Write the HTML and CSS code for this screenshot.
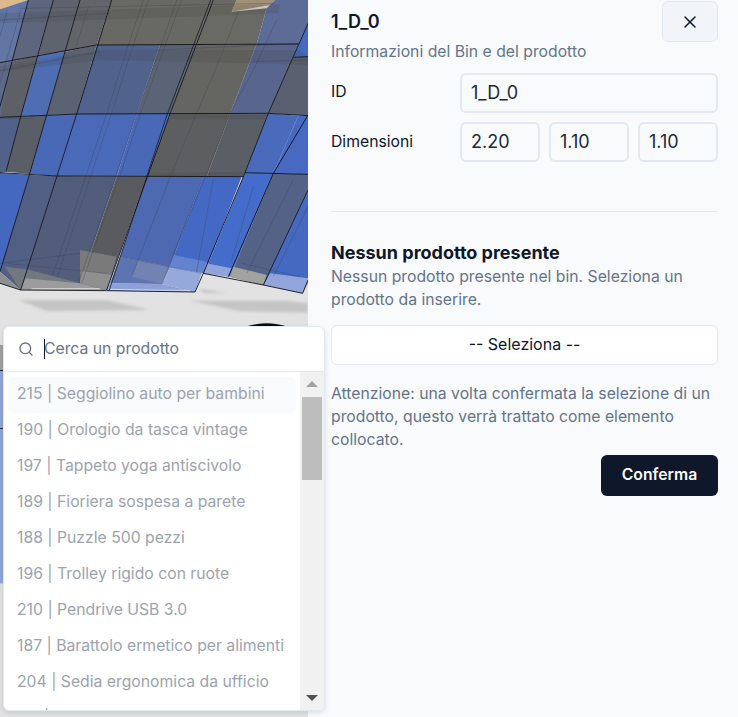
FILE: index.html
```html
<!DOCTYPE html>
<html lang="it">
<head>
<meta charset="utf-8">
<title>Bin</title>
<link rel="stylesheet" href="styles.css">
</head>
<body>
<div class="app">
  <div class="viewport">
    <svg class="scene" viewBox="0 0 924 2151" preserveAspectRatio="none" xmlns="http://www.w3.org/2000/svg">
      <defs>
        <filter id="soft"><feGaussianBlur stdDeviation="5"/></filter>
        <filter id="tiny"><feGaussianBlur stdDeviation="1.2"/></filter>
      </defs>
      <rect width="924" height="2151" fill="#e2e2e2"/>
      <!-- top row -->
      <polygon points="0,0 85,0 0,28" fill="#e2b884"/>
      <polygon points="0,28 85,0 35,185 0,190" fill="#5f76ab"/>
      <polygon points="85,0 160,0 115,165 35,185" fill="#5d6680"/>
      <polygon points="160,0 240,0 195,155 115,165" fill="#5f636f"/>
      <polygon points="240,0 335,0 290,135 195,155" fill="#62646a"/>
      <polygon points="335,0 640,0 590,135 290,135" fill="#696962"/>
      <polygon points="640,0 710,0 695,35 800,25 770,132 590,135" fill="#6a6a63"/>
      <polygon points="710,0 825,0 810,15 695,35" fill="#a48f73"/>
      <polygon points="825,0 924,0 924,70 895,132 770,132 800,25" fill="#5a6c9c"/>
      <polygon points="924,70 924,170 880,172 895,132" fill="#4169cc"/>
      <!-- second row -->
      <polygon points="0,188 35,185 10,352 0,352" fill="#5d6a8c"/>
      <polygon points="35,185 115,165 62,350 0,352" fill="#5e6068"/>
      <polygon points="115,165 195,155 140,345 62,350" fill="#4b6dbc"/>
      <polygon points="195,155 290,135 230,342 140,345" fill="#5a6274"/>
      <polygon points="290,135 480,135 410,342 230,342" fill="#4f6292"/>
      <polygon points="480,135 590,135 510,342 410,342" fill="#5a6379"/>
      <polygon points="590,135 770,132 690,342 510,342" fill="#656560"/>
      <polygon points="770,132 895,132 880,172 805,340 690,342" fill="#566692"/>
      <polygon points="880,172 924,170 924,347 805,340" fill="#5a6072"/>
      <!-- third row -->
      <polygon points="0,352 62,350 18,515 0,518" fill="#4e6290"/>
      <polygon points="62,350 140,345 90,522 18,515" fill="#5a5e68"/>
      <polygon points="140,345 230,342 170,528 90,522" fill="#4568c0"/>
      <polygon points="230,342 410,342 350,530 170,528" fill="#466ac4"/>
      <polygon points="410,342 510,342 440,530 350,530" fill="#4569c2"/>
      <polygon points="510,342 690,342 620,530 440,530" fill="#5d5e60"/>
      <polygon points="690,342 805,340 735,518 730,530 620,530" fill="#5a5e66"/>
      <polygon points="805,340 895,347 820,520 735,518" fill="#466bc6"/>
      <polygon points="895,347 924,347 924,523 820,520" fill="#4469ce"/>
      <!-- bottom row -->
      <polygon points="0,518 88,525 0,815" fill="#3f68cc"/>
      <polygon points="88,525 170,528 62,870 0,815" fill="#505f8a"/>
      <polygon points="170,528 350,530 240,850 62,870" fill="#515d80"/>
      <polygon points="350,530 440,530 320,870 240,850" fill="#5a5b60"/>
      <polygon points="440,530 610,530 510,800 360,770" fill="#4869bc"/>
      <polygon points="610,530 725,530 615,815 510,800" fill="#3f69d2"/>
      <polygon points="735,518 820,520 690,830 615,815" fill="#3e6cd8"/>
      <polygon points="820,520 924,523 924,570 790,855 690,830" fill="#52628c"/>
      <polygon points="924,570 924,835 790,855" fill="#4068cc"/>
      <!-- lower translucent band -->
      <polygon points="0,815 62,870 0,850" fill="#8d8e90"/>
      <polygon points="15,800 80,808 240,850 320,870 62,870" fill="#73777f"/>
      <polygon points="62,870 320,872 240,850 75,835" fill="#9c9c9d"/>
      <polygon points="240,750 350,770 320,870 240,850" fill="#7a7a7a"/>
      <polygon points="245,810 335,825 320,870 240,850" fill="#8f8f8f"/>
      <polygon points="360,770 510,800 485,852 330,850" fill="#5a74b8"/>
      <polygon points="415,780 510,800 485,852 395,830" fill="#6f83b8"/>
      <polygon points="330,850 485,852 585,876 320,872" fill="#8aa0de"/>
      <polygon points="510,800 605,820 585,876 485,852" fill="#94a9e2"/>
      <polygon points="520,765 620,785 610,820 505,800" fill="#5f82da"/>
      <polygon points="618,790 695,805 685,830 610,820" fill="#8ea4e0"/>
      <polygon points="700,800 800,825 790,855 690,830" fill="#a2a29f"/>
      <polygon points="810,820 924,835 924,850 908,880 790,855" fill="#8fa5e2"/>
      <!-- horizontal ghost bands -->
      <g fill="#3c3c3c" fill-opacity=".16">
        <polygon points="0,40 840,12 835,40 0,70"/>
        <polygon points="0,200 300,150 900,150 924,175 924,195 760,190 300,180 0,215"/>
        <polygon points="510,345 800,345 790,358 510,358"/>
        <polygon points="440,520 730,515 725,530 440,532"/>
      </g>
      <!-- inner ghost edges -->
      <g fill="none" stroke="#3a4050" stroke-opacity=".45" stroke-width="2.2">
        <path d="M22 30 0 110M62 30 0 250M265 20 225 150M430 0 380 150 320 340 260 520 158 825M445 0 395 150 335 340 275 520 172 830M530 0 480 145 410 340 350 520 235 850M545 0 492 145 422 340 362 520 245 850M715 35 650 200 590 340 515 520 395 830M830 60 770 190 690 340 620 520 485 852M608 535 510 790M640 535 590 815M760 560 695 780M880 540 740 820M924 620 820 830M60 25 820 10M0 60 330 40M0 212 300 155M470 150 900 130M760 185 924 180M0 790 240 760M20 790 320 820M360 770 605 820M725 790 900 830M0 355 100 355"/>
      </g>
      <!-- bold edges -->
      <g fill="none" stroke="#101218" stroke-width="2.7" stroke-linejoin="round">
        <path d="M85 0 0 320M160 0 62 350 18 515M240 0 140 345 88 525 0 815M335 0 230 342 62 870M640 0 510 342 320 870M924 70 805 340 735 518 610 820 585 876M924 345 820 520 685 830M924 570 790 855M0 188 290 135 895 132M880 172 924 170M0 352 230 342 805 340 924 347M0 518 170 528 730 530M735 518 924 523M0 850 62 870 320 872 585 876M610 820 790 855 908 880 924 840"/>
        <path d="M632 0 502 342 328 870" stroke-width="2.2"/>
      </g>
      <path d="M95 866H300M330 868 570 872" stroke="#f2f2f2" stroke-width="2.5" fill="none" opacity=".8"/>
      <!-- floor shadows -->
      <g filter="url(#soft)" fill="#c4c4c4">
        <polygon points="55,900 320,900 450,930 140,933"/>
        <polygon points="570,902 860,902 924,910 924,938 720,934"/>
        <polygon points="600,867 680,878 610,880"/>
      </g>
      <ellipse cx="800" cy="992" rx="72" ry="22" fill="#0b0b0b" filter="url(#tiny)"/>
      <!-- strip left of the popup -->
      <rect x="0" y="1035" width="12" height="75" fill="#a0a0a0"/>
      <rect x="0" y="1110" width="12" height="640" fill="#8ea4e0"/>
      <rect x="0" y="1110" width="12" height="3" fill="#222"/>
      <rect x="0" y="1284" width="12" height="3" fill="#333"/>
    </svg>
  </div>
  <main class="panel">
    <header class="panel-head">
      <div>
        <h1 class="title">1_D_0</h1>
        <p class="muted sub">Informazioni del Bin e del prodotto</p>
      </div>
      <button class="close" aria-label="Chiudi">
        <svg width="20" height="20" viewBox="0 0 24 24" fill="none" stroke="#0f172a" stroke-width="1.8" stroke-linecap="round"><path d="M18 6 6 18M6 6l12 12"/></svg>
      </button>
    </header>
    <div class="field field-id">
      <label class="label">ID</label>
      <div class="box box-wide">1_D_0</div>
    </div>
    <div class="field field-dim">
      <label class="label">Dimensioni</label>
      <div class="boxes">
        <div class="box">2.20</div>
        <div class="box">1.10</div>
        <div class="box">1.10</div>
      </div>
    </div>
    <hr class="rule">
    <h2 class="heading">Nessun prodotto presente</h2>
    <p class="muted desc">Nessun prodotto presente nel bin. Seleziona un prodotto da inserire.</p>
    <button class="select">-- Seleziona --</button>
    <p class="muted warn">Attenzione: una volta confermata la selezione di un prodotto, questo verrà trattato come elemento collocato.</p>
    <div class="actions"><button class="confirm">Conferma</button></div>
  </main>
</div>
<div class="popup">
  <div class="search">
    <svg width="16" height="16" viewBox="0 0 24 24" fill="none" stroke="#6b7280" stroke-width="2" stroke-linecap="round" stroke-linejoin="round"><circle cx="11" cy="11" r="8"/><path d="m21 21-4.3-4.3"/></svg>
    <span class="caret"></span>
    <span class="placeholder">Cerca un prodotto</span>
  </div>
  <div class="list-wrap">
    <ul class="list">
      <li class="item active">215 | Seggiolino auto per bambini</li>
      <li class="item">190 | Orologio da tasca vintage</li>
      <li class="item">197 | Tappeto yoga antiscivolo</li>
      <li class="item">189 | Fioriera sospesa a parete</li>
      <li class="item">188 | Puzzle 500 pezzi</li>
      <li class="item">196 | Trolley rigido con ruote</li>
      <li class="item">210 | Pendrive USB 3.0</li>
      <li class="item">187 | Barattolo ermetico per alimenti</li>
      <li class="item">204 | Sedia ergonomica da ufficio</li>
      <li class="item">191 | </li>
    </ul>
    <div class="scrollbar">
      <span class="arrow up"></span>
      <span class="thumb"></span>
      <span class="arrow down"></span>
    </div>
  </div>
</div>
</body>
</html>
```
FILE: styles.css
```css
* { box-sizing: border-box; }
html, body { margin: 0; height: 100%; overflow: hidden; }
body { font-family: Inter, "Liberation Sans", sans-serif; color: #0f172a; background: #f8fafc; }
.app { display: flex; height: 717px; }
.viewport { width: 308px; flex: none; overflow: hidden; }
.scene { display: block; width: 308px; height: 717px; filter: saturate(.88); }
.panel { flex: 1; padding: 1px 20px 0 23px; background: #f8fafc; }
.panel-head { display: flex; justify-content: space-between; align-items: flex-start; height: 72px; }
.title { margin: 11px 0 0; font-size: 18px; line-height: 20px; font-weight: 600; }
.sub { margin: 10px 0 0; line-height: 20px; }
.muted { color: #64748b; font-size: 15.75px; }
.close { width: 56px; height: 41px; background: #f1f5f9; border: 1px solid #e2e8f0; border-radius: 6px; display: flex; align-items: center; justify-content: center; padding: 0; }
.field { display: flex; }
.field-id { height: 40px; }
.field-dim { margin-top: 9px; height: 40px; }
.label { width: 129px; flex: none; font-size: 15.75px; font-weight: 400; }
.field-id .label { line-height: 37px; }
.field-dim .label { line-height: 39px; }
.boxes { display: flex; gap: 9px; flex: 1; }
.box { flex: 1; height: 40px; border: 2px solid #e2e8f0; border-radius: 6px; padding: 0 9px; font-size: 18px; line-height: 36px; color: #1e293b; }
.rule { border: 0; border-top: 1px solid #e2e8f0; margin: 49px 0 0; }
.heading { margin: 31px 0 0; font-size: 18px; line-height: 20px; font-weight: 700; }
.desc { margin: 2px 0 0; line-height: 23px; }
.select { display: block; width: 100%; height: 40px; margin-top: 14px; padding: 0 0 2px; background: #fff; border: 1px solid #e2e8f0; border-radius: 6px; font: 400 16px Inter, sans-serif; color: #0f172a; }
.warn { margin: 17px 0 0; line-height: 23px; }
.actions { display: flex; justify-content: flex-end; margin-top: 4px; }
.confirm { width: 117px; height: 41px; padding: 0 0 2px; background: #0f172a; color: #f8fafc; border: 0; border-radius: 6px; font: 600 15.75px Inter, sans-serif; }
.popup { position: absolute; left: 3px; top: 326px; width: 322px; height: 385px; background: #fff; border-radius: 6px; border: 1px solid #e2e8f0; overflow: hidden; box-shadow: 0 2px 5px rgba(15, 23, 42, .12); }
.search { display: flex; align-items: center; height: 45px; padding-left: 14px; border-bottom: 1px solid #e2e8f0; position: relative; }
.placeholder { margin-left: 10px; font-size: 15.75px; color: #64748b; padding-bottom: 2px; }
.caret { position: absolute; left: 40px; top: 12px; width: 1px; height: 20px; background: #0f172a; }
.list-wrap { display: flex; height: 339px; overflow: hidden; }
.list { flex: 1; margin: 0; padding: 5px 4px; list-style: none; min-width: 0; }
.item { height: 36px; line-height: 33px; padding-left: 9px; font-size: 15.75px; color: #9ca3af; border-radius: 6px; white-space: nowrap; }
.item.active { background: #f8fafc; }
.scrollbar { width: 24px; flex: none; background: #f1f1f1; position: relative; }
.thumb { position: absolute; left: 2px; right: 2px; top: 25px; height: 83px; background: #bdbdbd; }
.arrow { position: absolute; left: 6px; width: 0; height: 0; border-left: 6px solid transparent; border-right: 6px solid transparent; }
.arrow.up { top: 9px; border-bottom: 6px solid #a3a3a3; }
.arrow.down { bottom: 10px; border-top: 6px solid #505050; }
```
